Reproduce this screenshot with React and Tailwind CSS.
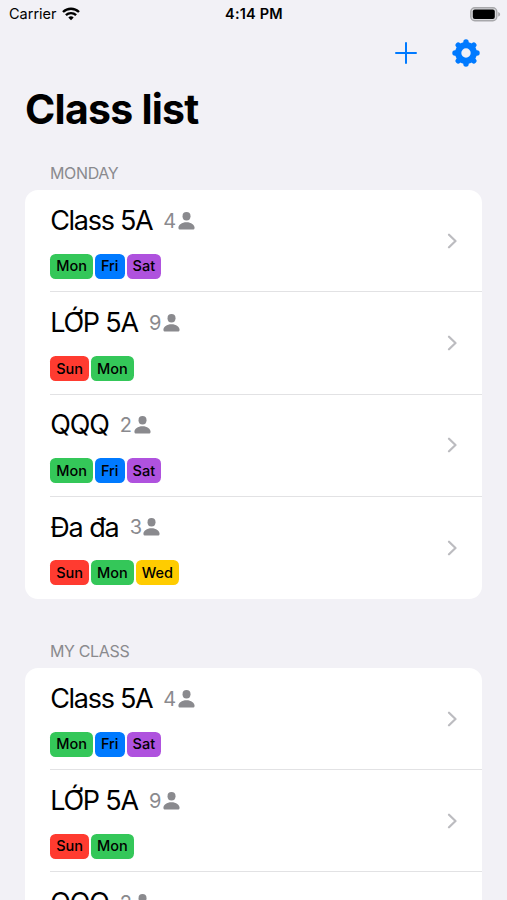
import clsx from "clsx";

const dayColors = {
  Sun: "bg-[#ff3b30]",
  Mon: "bg-[#34c759]",
  Wed: "bg-[#ffcc00]",
  Fri: "bg-[#007aff]",
  Sat: "bg-[#af52de]",
};

const classes = [
  { name: "Class 5A", students: 4, days: ["Mon", "Fri", "Sat"], tracking: "tracking-[-1.3px]" },
  { name: "LỚP 5A", students: 9, days: ["Sun", "Mon"], tracking: "tracking-[-1.2px]" },
  { name: "QQQ", students: 2, days: ["Mon", "Fri", "Sat"], tracking: "tracking-[-1.1px]" },
  { name: "Đa đa", students: 3, days: ["Sun", "Mon", "Wed"], tracking: "tracking-[-1.1px]" },
];

const sections = [
  { title: "MONDAY", items: classes },
  { title: "MY CLASS", items: classes.slice(0, 3) },
];

function WifiIcon() {
  return (
    <svg width="18" height="14" viewBox="0 0 18 14" fill="none" stroke="#000" strokeWidth="2.4">
      <path d="M1 5a11.6 11.6 0 0 1 16 0" />
      <path d="M3.9 8.2a7.4 7.4 0 0 1 10.2 0" />
      <path d="M9 13.2 6.3 10.5a3.9 3.9 0 0 1 5.4 0Z" fill="#000" stroke="none" />
    </svg>
  );
}

function BatteryIcon() {
  return (
    <svg width="31" height="15" viewBox="0 0 31 15">
      <rect x="0.8" y="0.8" width="26" height="13" rx="4" fill="#d9d9dc" stroke="#a8a8ab" strokeWidth="1.4" />
      <rect x="2.8" y="2.6" width="22" height="9.4" rx="2" fill="#000" />
      <path d="M28.2 5v4.6c1.2-.4 1.9-1.3 1.9-2.3s-.7-1.9-1.9-2.3Z" fill="#a8a8ab" />
    </svg>
  );
}

function PlusIcon() {
  return (
    <svg width="22" height="22" viewBox="0 0 22 22" fill="none" stroke="#007aff" strokeWidth="2" strokeLinecap="round">
      <path d="M11 1v20M1 11h20" />
    </svg>
  );
}

function GearIcon() {
  return (
    <svg width="28" height="28" viewBox="-14 -14 28 28">
      <g stroke="#007aff" strokeWidth="5.4" strokeLinecap="round">
        <path d="M0-11V-8M0 11V8M-11 0H-8M11 0H8" />
        <path d="M-7.8-7.8-6-6M7.8 7.8 6 6M-7.8 7.8-6 6M7.8-7.8 6-6" />
      </g>
      <circle r="7.8" fill="none" stroke="#007aff" strokeWidth="6.2" />
    </svg>
  );
}

function PersonIcon() {
  return (
    <svg width="17" height="18" viewBox="0 0 17 18" fill="#8a8a8e">
      <ellipse cx="8.5" cy="4.2" rx="4" ry="4.2" />
      <path d="M8.5 10.2c4.7 0 8.1 2.6 8.1 5.5 0 1.3-.7 1.9-2 1.9H2.4c-1.3 0-2-.6-2-1.9 0-2.9 3.4-5.5 8.1-5.5Z" />
    </svg>
  );
}

function ChevronIcon() {
  return (
    <svg width="10" height="16" viewBox="0 0 10 16" fill="none" stroke="#bcbcc0" strokeWidth="2.2" strokeLinecap="round" strokeLinejoin="round">
      <path d="m2 1.700 6.500 6.300L2 14.300" />
    </svg>
  );
}

function ClassRow({ item, last }) {
  return (
    <div className="pl-[25px]">
      <div
        className={clsx(
          "flex h-[102.2px] items-center justify-between pr-[25px]",
          !last && "border-b border-[#e2e2e4]"
        )}
      >
        <div className="flex h-full flex-col">
          <div className="mt-[13.5px] flex h-[34px] items-center">
            <span className={clsx("pt-px text-[27px]", item.tracking)}>{item.name}</span>
            <span className="ml-[11px] text-[20px] text-[#8a8a8e]">{item.students}</span>
            <span className="ml-[1.5px]">
              <PersonIcon />
            </span>
          </div>
          <div className="mt-[16px] flex gap-[2px]">
            {item.days.map((day) => (
              <span
                key={day}
                className={clsx(
                  "flex h-[25px] items-center rounded-[5.5px] px-[6px] text-[14.5px] font-medium",
                  dayColors[day]
                )}
              >
                {day}
              </span>
            ))}
          </div>
        </div>
        <ChevronIcon />
      </div>
    </div>
  );
}

export default function App() {
  return (
    <div className="h-[900px] overflow-hidden bg-[#f2f1f6] font-['Inter',sans-serif] text-black">
      {/* Status bar */}
      <div className="grid h-[28px] grid-cols-3 items-center pr-[6px] pl-[9px]">
        <div className="flex items-center gap-[5px] text-[14.5px]">
          <span>Carrier</span>
          <WifiIcon />
        </div>
        <div className="pr-[2px] text-center text-[14.5px] font-semibold tracking-[0.2px]">4:14 PM</div>
        <div className="flex justify-end">
          <BatteryIcon />
        </div>
      </div>

      {/* Toolbar */}
      <div className="flex h-[49px] items-center justify-end gap-[35px] pr-[26.6px]">
        <button aria-label="Add class">
          <PlusIcon />
        </button>
        <button aria-label="Settings">
          <GearIcon />
        </button>
      </div>

      <h1 className="h-[79px] pl-[25px] text-[41px] leading-[64px] font-bold tracking-[-0.75px]">Class list</h1>

      {/* Class sections */}
      {sections.map((section) => (
        <section key={section.title} className="mb-[34.7px] pr-[24.8px] pl-[25.2px]">
          <h2 className="flex h-[34.3px] items-center pl-[24.8px] text-[16px] tracking-[-0.35px] text-[#8a8a8e]">
            {section.title}
          </h2>
          <div className="overflow-hidden rounded-[13px] bg-white">
            {section.items.map((item, i) => (
              <ClassRow key={item.name} item={item} last={i === section.items.length - 1} />
            ))}
          </div>
        </section>
      ))}
    </div>
  );
}
